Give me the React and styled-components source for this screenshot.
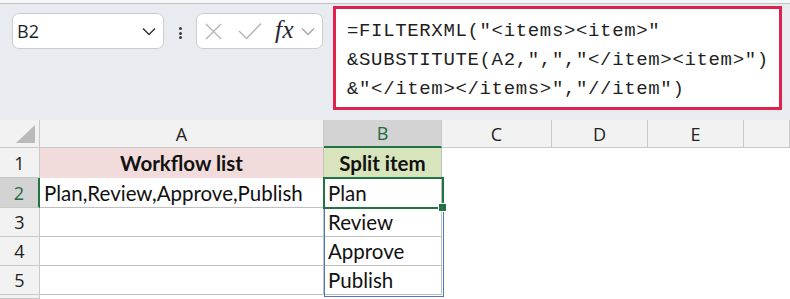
import React from 'react';
import styled, { createGlobalStyle, css } from 'styled-components';

const GlobalStyle = createGlobalStyle`
  html, body { margin: 0; padding: 0; background: #e8ebef; }
  body { width: 790px; height: 299px; overflow: hidden; font-family: "Open Sans", sans-serif; }
`;

const Page = styled.div`
  display: flex;
  flex-direction: column;
  width: 790px;
  height: 299px;
  background: #e8ebef;
  overflow: hidden;
`;

const TopEdge = styled.div`
  height: 3px;
  background: #f5f6f7;
  box-shadow: 0 1px 1px rgba(0, 0, 0, 0.18);
`;

const Toolbar = styled.div`
  display: flex;
  align-items: flex-start;
  height: 117px;
  padding-left: 12px;
  box-sizing: border-box;
`;

const NameBox = styled.div`
  margin-top: 10px;
  width: 152px;
  height: 36px;
  box-sizing: border-box;
  border: 1px solid #c9cdd2;
  border-radius: 7px;
  background: #fff;
  display: flex;
  align-items: center;
  justify-content: space-between;
  padding: 0 7px 0 4px;
  font-family: "Open Sans", sans-serif;
  font-size: 18px;
  color: #1f1f1f;
`;

const Dots = styled.div`
  margin: 24px 0 0 15px;
  display: flex;
  flex-direction: column;
  gap: 1.5px;
`;

const Dot = styled.span`
  width: 3px;
  height: 3px;
  border-radius: 50%;
  background: #3c3c3c;
`;

const FormulaButtons = styled.div`
  margin: 10px 0 0 14px;
  width: 127px;
  height: 36px;
  box-sizing: border-box;
  border: 1px solid #c9cdd2;
  border-radius: 7px;
  background: #fff;
  display: flex;
  align-items: center;
  padding-left: 8px;
`;

const IconSlot = styled.span`
  display: flex;
  align-items: center;
  margin-left: ${(p) => p.$gap || 0}px;
`;

const Fx = styled.span`
  font-family: "Liberation Serif", serif;
  font-style: italic;
  font-size: 25px;
  line-height: 1;
  color: #1f2530;
  letter-spacing: 0.5px;
  margin-left: 13px;
  margin-top: -3px;
`;

const FormulaInput = styled.div`
  margin: 3px 0 0 10px;
  width: 449px;
  height: 104px;
  box-sizing: border-box;
  border: 3px solid #e0224c;
  background: #fff;
  padding: 8px 0 0 11px;
  font-family: "Liberation Mono", monospace;
  font-size: 19px;
  letter-spacing: 0.65px;
  line-height: 29px;
  color: #1f1f1f;
  white-space: pre;
`;

const Sheet = styled.div`
  position: relative;
  display: grid;
  grid-template-columns: 40px 284px 118px 110px 96px 96px 46px;
  grid-template-rows: 28px 30px 30px 29px 29px 29px 4px;
  background: #fff;
  font-family: "Lato", sans-serif;
`;

const headerBase = css`
  box-sizing: border-box;
  background: #f2f2f2;
  border-right: 1px solid #c8c8c8;
  border-bottom: 1px solid #c8c8c8;
  display: flex;
  align-items: center;
  justify-content: center;
  font-family: "Open Sans", sans-serif;
  font-size: 18px;
  color: #222;
  overflow: hidden;
`;

const Corner = styled.div`
  ${headerBase};
  position: relative;
  &::after {
    content: '';
    position: absolute;
    right: 4px;
    bottom: 4px;
    width: 0;
    height: 0;
    border-left: 19px solid transparent;
    border-bottom: 18px solid #b9b9b9;
  }
`;

const ColHeader = styled.div`
  ${headerBase};
  ${(p) =>
    p.$selected &&
    css`
      background: #d3d3d3;
      color: #1d6b3e;
      border-bottom: 2px solid #217346;
    `}
`;

const RowHeader = styled.div`
  ${headerBase};
  ${(p) =>
    p.$selected &&
    css`
      background: #d3d3d3;
      color: #1d6b3e;
      border-right: 2px solid #217346;
    `}
`;

const tones = {
  pink: '#f2dcdb',
  green: '#d8e4bc',
  plain: '#ffffff',
};

const Cell = styled.div`
  box-sizing: border-box;
  background: ${(p) => tones[p.$tone] || '#fff'};
  border-right: 1px solid #c0c0c0;
  border-bottom: 1px solid ${(p) => (p.$tone === 'pink' ? tones.pink : '#c0c0c0')};
  display: flex;
  align-items: center;
  justify-content: ${(p) => (p.$center ? 'center' : 'flex-start')};
  padding-left: ${(p) => (p.$center ? 0 : 4)}px;
  font-size: 20.5px;
  font-weight: ${(p) => (p.$bold ? 700 : 400)};
  color: #111;
  white-space: nowrap;
  overflow: hidden;
`;

const Blank = styled.div`
  background: #fff;
`;

const Selection = styled.div`
  position: absolute;
  left: 323px;
  top: 57px;
  width: 121px;
  height: 32px;
  box-sizing: border-box;
  border: 2px solid #217346;
  pointer-events: none;
`;

const Handle = styled.div`
  position: absolute;
  left: 439px;
  top: 84px;
  width: 7px;
  height: 7px;
  background: #217346;
  outline: 1px solid #fff;
`;

const SpillRange = styled.div`
  position: absolute;
  left: 324px;
  top: 58px;
  width: 119.5px;
  height: 119px;
  box-sizing: border-box;
  border: 1.5px solid #4a78c9;
  pointer-events: none;
`;

const XIcon = () => (
  <svg width="17" height="17" viewBox="0 0 17 17">
    <path d="M1 1 L16 16 M16 1 L1 16" stroke="#b4b4b4" strokeWidth="1.4" fill="none" />
  </svg>
);

const CheckIcon = () => (
  <svg width="24" height="18" viewBox="0 0 24 18">
    <path d="M1 9 L8.5 16.5 L23 1.5" stroke="#b4b4b4" strokeWidth="1.4" fill="none" />
  </svg>
);

const Chevron = ({ color = '#333', w = 14 }) => (
  <svg width={w} height="9" viewBox="0 0 14 9">
    <path d="M1 1.5 L7 7.5 L13 1.5" stroke={color} strokeWidth="1.5" fill="none" />
  </svg>
);

const cols = ['A', 'B', 'C', 'D', 'E', ''];

const rows = [
  { n: 1, a: 'Workflow list', b: 'Split item', header: true },
  { n: 2, a: 'Plan,Review,Approve,Publish', b: 'Plan' },
  { n: 3, a: '', b: 'Review' },
  { n: 4, a: '', b: 'Approve' },
  { n: 5, a: '', b: 'Publish' },
];

export default function App() {
  return (
    <Page>
      <GlobalStyle />
      <TopEdge />
      <Toolbar>
        <NameBox>
          <span>B2</span>
          <Chevron />
        </NameBox>
        <Dots>
          <Dot />
          <Dot />
          <Dot />
        </Dots>
        <FormulaButtons>
          <IconSlot>
            <XIcon />
          </IconSlot>
          <IconSlot $gap={16}>
            <CheckIcon />
          </IconSlot>
          <Fx>fx</Fx>
          <IconSlot $gap={7}>
            <Chevron color="#a8a8a8" />
          </IconSlot>
        </FormulaButtons>
        <FormulaInput>
          {'=FILTERXML("<items><item>"\n&SUBSTITUTE(A2,",","</item><item>")\n&"</item></items>","//item")'}
        </FormulaInput>
      </Toolbar>
      <Sheet>
        <Corner />
        {cols.map((c) => (
          <ColHeader key={c || 'x'} $selected={c === 'B'}>
            {c}
          </ColHeader>
        ))}
        {rows.map((r) => (
          <React.Fragment key={r.n}>
            <RowHeader $selected={r.n === 2}>{r.n}</RowHeader>
            {r.header ? (
              <>
                <Cell $tone="pink" $bold $center>
                  {r.a}
                </Cell>
                <Cell $tone="green" $bold $center>
                  {r.b}
                </Cell>
              </>
            ) : (
              <>
                <Cell $tone="plain">{r.a}</Cell>
                <Cell $tone="plain">{r.b}</Cell>
              </>
            )}
            <Blank />
            <Blank />
            <Blank />
            <Blank />
          </React.Fragment>
        ))}
        <RowHeader />
        <Blank />
        <Blank />
        <Blank />
        <Blank />
        <Blank />
        <Blank />
        <SpillRange />
        <Selection />
        <Handle />
      </Sheet>
    </Page>
  );
}
